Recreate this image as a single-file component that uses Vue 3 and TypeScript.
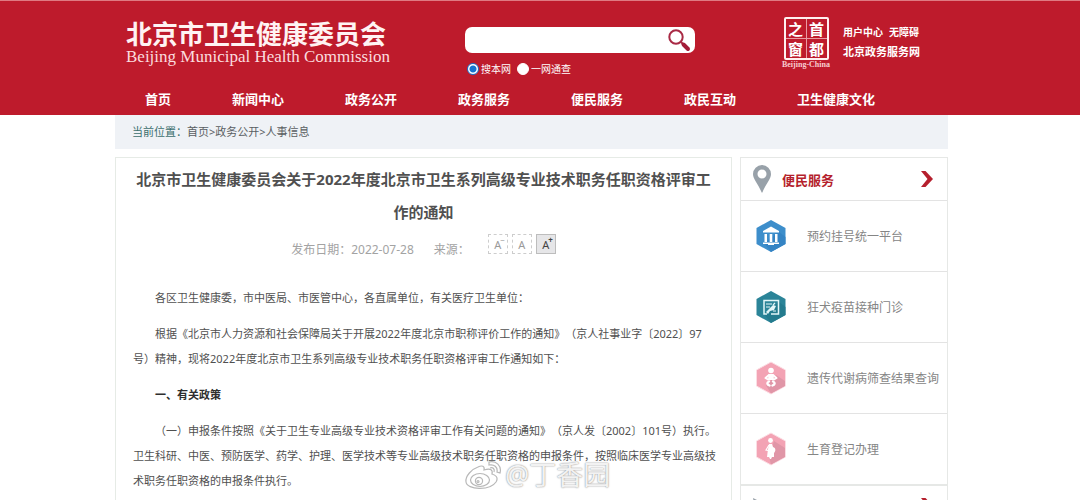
<script setup lang="ts">
import { ref } from 'vue'

const keyword = ref('')
const scope = ref('site')
const nav: string[] = ['首页', '新闻中心', '政务公开', '政务服务', '便民服务', '政民互动', '卫生健康文化']

interface Service {
  label: string
  icon: 'bank' | 'clinic' | 'baby' | 'mother'
}
const services: Service[] = [
  { label: '预约挂号统一平台', icon: 'bank' },
  { label: '狂犬疫苗接种门诊', icon: 'clinic' },
  { label: '遗传代谢病筛查结果查询', icon: 'baby' },
  { label: '生育登记办理', icon: 'mother' },
]
</script>

<template>
  <div class="page">
    <header class="header">
      <div class="wrap masthead">
        <div class="brand">
          <div class="brand-cn">北京市卫生健康委员会</div>
          <div class="brand-en">Beijing Municipal Health Commission</div>
        </div>
        <form class="search" @submit.prevent>
          <div class="search-box">
            <input v-model="keyword" type="text" class="search-input" aria-label="搜索" />
            <button type="submit" class="search-btn" aria-label="搜索">
              <svg viewBox="0 0 24 24" width="24" height="24">
                <circle cx="9" cy="9" r="6.7" fill="none" stroke="#a92a45" stroke-width="2" />
                <path d="M13.5 13.5l3 3" stroke="#a92a45" stroke-width="2" />
                <path d="M16.500 16.500l4.500 4.500" stroke="#a31c38" stroke-width="4" stroke-linecap="round" />
              </svg>
            </button>
          </div>
          <div class="scopes">
            <label class="scope"><input v-model="scope" type="radio" name="scope" value="site" />搜本网</label>
            <label class="scope"><input v-model="scope" type="radio" name="scope" value="all" />一网通查</label>
          </div>
        </form>
        <div class="tools">
          <a class="seal" href="#">
            <span class="seal-grid"><span>之</span><span>首</span><span>窗</span><span>都</span></span>
            <span class="seal-en">Beijing-China</span>
          </a>
          <div class="links">
            <div class="links-row"><a href="#">用户中心</a><a href="#">无障碍</a></div>
            <a class="links-main" href="#">北京政务服务网</a>
          </div>
        </div>
      </div>
      <nav class="wrap nav">
        <a v-for="item in nav" :key="item" href="#">{{ item }}</a>
      </nav>
    </header>

    <div class="body">
      <div class="wrap crumbs">
        <span class="crumbs-label">当前位置：</span><a href="#">首页</a>&gt;<a href="#">政务公开</a>&gt;<a href="#">人事信息</a>
      </div>
      <div class="wrap columns">
        <main class="article">
          <h1>北京市卫生健康委员会关于2022年度北京市卫生系列高级专业技术职务任职资格评审工作的通知</h1>
          <div class="meta">
            <span class="date">发布日期：2022-07-28</span>
            <span class="source">来源：</span>
            <span class="sizes">
              <button type="button" aria-label="缩小字号">A<sup>−</sup></button>
              <button type="button" aria-label="默认字号">A</button>
              <button type="button" class="active" aria-label="放大字号">A<sup>+</sup></button>
            </span>
          </div>
          <div class="text">
            <p>各区卫生健康委，市中医局、市医管中心，各直属单位，有关医疗卫生单位：</p>
            <p>根据《北京市人力资源和社会保障局关于开展2022年度北京市职称评价工作的通知》（京人社事业字〔2022〕97号）精神，现将2022年度北京市卫生系列高级专业技术职务任职资格评审工作通知如下：</p>
            <p><strong>一、有关政策</strong></p>
            <p>（一）申报条件按照《关于卫生专业高级专业技术资格评审工作有关问题的通知》（京人发〔2002〕101号）执行。卫生科研、中医、预防医学、药学、护理、医学技术等专业高级技术职务任职资格的申报条件，按照临床医学专业高级技术职务任职资格的申报条件执行。</p>
          </div>
          <div class="watermark">
            <svg viewBox="0 0 38 32" width="38" height="32" fill="none" stroke="#b8b8b8" stroke-width="1.2">
              <path fill="#fff" fill-opacity=".75" d="M14 8C8 10 1 17 2 23c1 8 24 9 30 0 3-5-1-7-4-8 1-4-1-6-8-4 1-4-2-5-6-3z" />
              <ellipse cx="16" cy="21" rx="9.5" ry="6.5" />
              <circle cx="15" cy="22" r="3.6" />
              <circle cx="14" cy="22.500" r="1" />
              <path fill="#fff" fill-opacity=".75" d="M25 3c7-2 13 4 11 11l-3-1c1-5-3-8-8-7z" />
              <path d="M26 9c3-1 5 1 4 4" />
            </svg>
            <span>@丁香园</span>
          </div>
        </main>

        <aside class="side">
          <section class="panel">
            <h2>
              <svg class="pin" viewBox="0 0 20 28" width="20" height="28">
                <path fill="#98a1a9" fill-rule="evenodd" d="M10 0a9 9 0 0 0-9 9c0 5 4 8 9 19 5-11 9-14 9-19a9 9 0 0 0-9-9zm0 4.500a4.500 4.500 0 1 1 0 9 4.500 4.500 0 0 1 0-9z" />
              </svg>
              <span>便民服务</span>
              <svg class="arrow" viewBox="0 0 12 16" width="12" height="16">
                <path fill="#b51f2d" d="M0 0h4.500L12 8l-7.500 8H0l6.500-8z" />
              </svg>
            </h2>
            <ul>
              <li v-for="s in services" :key="s.icon">
                <a href="#">
                  <svg viewBox="0 0 30 34" width="30" height="34">
                    <template v-if="s.icon === 'bank'">
                      <path fill="#3d8ecb" d="M15 1l14.500 8v16L15 33 .5 25V9z" />
                      <path fill="#3584c4" d="M23 13l6.500 5v7L15 33l-7-9z" />
                      <path fill="#fff" d="M15 7.500l8 4.500v1.500H7V12zM8.500 15H11v8H8.500zm5.200 0h2.600v8h-2.600zm5.300 0h2.500v8H19zM7 23.500h16V25h-5v1h-6v-1H7z" />
                    </template>
                    <template v-else-if="s.icon === 'clinic'">
                      <path fill="#2b8498" d="M15 1l14.500 8v16L15 33 .5 25V9z" />
                      <path fill="#247b8e" d="M23 12l6.500 5v8L15 33l-7-9z" />
                      <path fill="none" stroke="#e3f6f8" stroke-width="1.500" d="M11 24H8V10.500h14.500V24H15" />
                      <path stroke="#e3f6f8" stroke-width="1.200" d="M10 14h6m-6 3h4m5-4l-2 2m3 6h-3" />
                      <path fill="#e3f6f8" d="M10 22l4-4 3-3 3 1-2 4-4 1-2 3z" />
                    </template>
                    <template v-else-if="s.icon === 'baby'">
                      <path fill="#f3a3b4" stroke="#fbdde3" d="M15 1l14.500 8v16L15 33 .5 25V9z" />
                      <path fill="#e096a7" d="M20 14l9 6v5L15 32.500l-5-8z" />
                      <circle cx="15" cy="9.500" r="2.800" fill="#fff" />
                      <path fill="none" stroke="#fff" stroke-width="2" stroke-linecap="round" stroke-linejoin="round" d="M13 14l-3.500 3 2.500 1.500m5-4.500l3.500 3-2.500 1.500" />
                      <path fill="#fff" d="M12.500 13h5l.5 6h-6z" />
                      <path fill="none" stroke="#fff" stroke-width="2.400" stroke-linecap="round" stroke-linejoin="round" d="M13 20.500c-2.500 1-2 3 .5 4m3.500-4c2.500 1 2 3-.5 4" />
                    </template>
                    <template v-else>
                      <path fill="#f3a3b4" stroke="#fbdde3" d="M15 1l14.500 8v16L15 33 .5 25V9z" />
                      <path fill="#e096a7" d="M18 9l11 7v9L15 32.500l-2-8z" />
                      <circle cx="14.500" cy="8.500" r="2.400" fill="#fff" />
                      <path fill="#fff" d="M13 12h3l1 3c3 1 3 4 1 6v4h-2l-1 2h-1l-1-2h-2l1-8z" />
                      <path fill="none" stroke="#fff" stroke-width="1.200" d="M13 13l-3 5 5 1" />
                    </template>
                  </svg>
                  <span>{{ s.label }}</span>
                </a>
              </li>
            </ul>
          </section>
          <section class="panel next">
            <svg viewBox="0 0 20 20" width="20" height="20"><path fill="#98a1a9" d="M1 0l18 9L4 17z" /></svg>
            <svg class="arrow" viewBox="0 0 12 16" width="12" height="16">
              <path fill="#b51f2d" d="M0 0h4.500L12 8l-7.500 8H0l6.500-8z" />
            </svg>
          </section>
        </aside>
      </div>
    </div>
  </div>
</template>

<style>
body {
  margin: 0;
  background: #fff;
}
</style>

<style scoped>
.page {
  height: 100vh;
  overflow: hidden;
  font-family: "Noto Sans", "Noto Sans CJK SC", sans-serif;
  text-spacing-trim: space-all;
  font-size: 11px;
  color: #505050;
}
a {
  color: inherit;
  text-decoration: none;
}
.header,
.body {
  padding-right: 17px;
}
.wrap {
  max-width: 833px;
  margin: 0 auto;
  box-sizing: border-box;
}
.header {
  background: #be1b2c;
  color: #fff;
  border-top: 1px solid #df7a82;
}
.masthead {
  display: grid;
  grid-template-columns: 350fr 230fr 253fr;
  height: 83px;
}
.brand {
  padding: 17px 0 0 11px;
  white-space: nowrap;
}
.brand-cn {
  font-family: "Noto Sans CJK SC", sans-serif;
  font-size: 26px;
  line-height: 30px;
  font-weight: 700;
  color: #fff3f3;
}
.brand-en {
  font-family: "Liberation Serif", serif;
  font-size: 17px;
  line-height: 18px;
  color: #fbdcdf;
}
.search {
  padding-top: 26px;
}
.search-box {
  display: flex;
  align-items: center;
  height: 26px;
  border-radius: 7px;
  background: #fff;
}
.search-input {
  flex: 1;
  min-width: 0;
  height: 26px;
  padding: 0 8px;
  box-sizing: border-box;
  border: 0;
  border-radius: 7px;
  background: transparent;
  outline: none;
}
.search-btn {
  display: flex;
  padding: 0;
  margin-right: 4px;
  border: 0;
  background: none;
}
.scopes {
  display: flex;
  gap: 6px;
  padding: 8px 0 0 2px;
}
.scope {
  display: flex;
  align-items: center;
  gap: 2px;
  font-size: 10px;
  line-height: 16px;
}
.scope input {
  appearance: none;
  width: 12px;
  height: 12px;
  margin: 0;
  border: 1px solid #fff;
  border-radius: 50%;
  background: #fff;
}
.scope input:checked {
  border: 1px solid #1672cf;
  background: radial-gradient(circle, #1672cf 3px, #fff 4px);
}
.tools {
  display: flex;
  gap: 12px;
  padding: 16px 0 0 86px;
}
.seal {
  display: flex;
  flex-direction: column;
  align-items: center;
  width: 50px;
}
.seal-grid {
  display: grid;
  grid-template-columns: 1fr 1fr;
  gap: 1px;
  border: 2px solid #fff0f0;
  border-radius: 2px;
  background: #e99ba2;
}
.seal-grid span {
  width: 20px;
  height: 19px;
  background: #be1b2c;
  font-family: "Noto Sans CJK SC", sans-serif;
  font-size: 15px;
  line-height: 19px;
  font-weight: 700;
  text-align: center;
}
.seal-en {
  font-family: "Liberation Serif", serif;
  font-size: 8px;
  line-height: 9px;
  font-weight: 700;
  color: #f8cdd1;
}
.links {
  padding-top: 6px;
  font-weight: 700;
  font-size: 10px;
  line-height: 19px;
  white-space: nowrap;
}
.links-row {
  display: flex;
  gap: 6px;
}
.links-main {
  font-size: 11px;
}
.nav {
  display: flex;
  gap: 61px;
  padding-left: 30px;
  font-size: 13px;
  line-height: 31px;
  font-weight: 700;
  white-space: nowrap;
}
.crumbs {
  padding: 0 17px;
  background: #eff2f6;
  line-height: 34px;
  color: #5a5e62;
}
.crumbs-label {
  color: #3c6f6e;
}
.columns {
  display: grid;
  grid-template-columns: minmax(0, 1fr) 208px;
  gap: 8px;
  padding-top: 8px;
}
.article {
  position: relative;
  min-height: 400px;
  padding: 5px 10px 0 17px;
  border: 1px solid #e6ebe6;
}
h1 {
  margin: 0;
  padding-right: 7px;
  font-size: 15px;
  line-height: 33px;
  font-weight: 700;
  color: #505050;
  text-align: center;
}
.meta {
  display: flex;
  justify-content: center;
  padding: 5px 7px 0 0;
  font-size: 12px;
  line-height: 32px;
  color: #a3a3a3;
}
.source {
  margin-left: 20px;
}
.sizes {
  display: flex;
  gap: 4px;
  margin-left: 18px;
}
.sizes button {
  position: relative;
  width: 20px;
  height: 20px;
  padding: 0;
  border: 1px dashed #cdcdcd;
  background: #fff;
  font: 11px "Noto Sans", sans-serif;
  color: #9a9a9a;
}
.sizes sup {
  position: absolute;
  top: 0;
  right: 2px;
  font-size: 8px;
  line-height: 10px;
}
.sizes .active {
  border: 1px solid #bdbdbd;
  background: #e6e6e8;
  color: #444;
}
.sizes .active sup {
  font-weight: 700;
}
.text {
  padding-top: 8px;
  line-height: 25px;
}
.text p {
  margin: 11px 0 0;
  text-indent: 2em;
}
.text strong {
  color: #2e2e2e;
}
.watermark {
  position: absolute;
  left: 348px;
  top: 301px;
  display: flex;
  align-items: center;
  gap: 3px;
  font-size: 27px;
  line-height: 32px;
  color: rgba(255, 255, 255, 0.9);
  text-shadow: 0 0 1px #999, 0 0 2px #aaa;
  white-space: nowrap;
}
.panel {
  border: 1px solid #e6e8e6;
}
h2 {
  display: flex;
  align-items: center;
  height: 42px;
  margin: 0;
  padding: 0 14px 0 11px;
  border-bottom: 1px solid #e3e3e3;
  font-size: 13px;
  color: #b51f2d;
}
h2 span {
  margin-left: 10px;
}
.arrow {
  margin-left: auto;
}
ul {
  margin: 0;
  padding: 0;
  list-style: none;
}
li + li {
  border-top: 1px solid #e3e3e3;
}
li a {
  display: flex;
  align-items: center;
  gap: 21px;
  height: 70px;
  padding-left: 15px;
  font-size: 12px;
  color: #858585;
  white-space: nowrap;
}
.next {
  display: flex;
  padding: 12px 14px 12px 11px;
}
</style>
